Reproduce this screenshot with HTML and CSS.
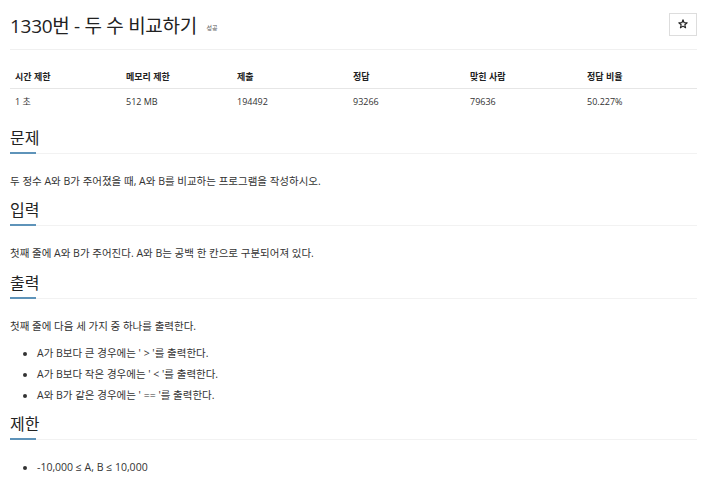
FILE: index.html
```html
<!DOCTYPE html>
<html lang="ko">
<head>
<meta charset="utf-8">
<link rel="stylesheet" href="styles.css">
</head>
<body>
<div class="page">
  <div class="page-header">
    <h1 class="title">1330번 - 두 수 비교하기 <span class="label">성공</span></h1>
    <button class="star" type="button">
      <svg width="10" height="10" viewBox="0 0 10 10"><path d="M5 0.8 L6.1 3.7 L9.2 3.8 L6.8 5.7 L7.6 8.8 L5 7.1 L2.4 8.8 L3.2 5.7 L0.8 3.8 L3.9 3.7 Z" fill="none" stroke="#222" stroke-width="1.1" stroke-linejoin="round"/></svg>
    </button>
  </div>
  <div class="info">
    <div class="row head">
      <div>시간 제한</div><div>메모리 제한</div><div>제출</div><div>정답</div><div>맞힌 사람</div><div>정답 비율</div>
    </div>
    <div class="row">
      <div>1 초</div><div>512 MB</div><div>194492</div><div>93266</div><div>79636</div><div>50.227%</div>
    </div>
  </div>
  <section class="sec">
    <div class="headline"><h2>문제</h2></div>
    <p class="text">두 정수 A와 B가 주어졌을 때, A와 B를 비교하는 프로그램을 작성하시오.</p>
  </section>
  <section class="sec">
    <div class="headline"><h2>입력</h2></div>
    <p class="text">첫째 줄에 A와 B가 주어진다. A와 B는 공백 한 칸으로 구분되어져 있다.</p>
  </section>
  <section class="sec">
    <div class="headline"><h2>출력</h2></div>
    <p class="text">첫째 줄에 다음 세 가지 중 하나를 출력한다.</p>
    <ul class="list">
      <li>A가 B보다 큰 경우에는 '&nbsp;&gt;&nbsp;'를 출력한다.</li>
      <li>A가 B보다 작은 경우에는 '&nbsp;&lt;&nbsp;'를 출력한다.</li>
      <li>A와 B가 같은 경우에는 '&nbsp;==&nbsp;'를 출력한다.</li>
    </ul>
  </section>
  <section class="sec">
    <div class="headline"><h2>제한</h2></div>
    <ul class="list">
      <li>-10,000 ≤ A, B ≤ 10,000</li>
    </ul>
  </section>
</div>
</body>
</html>
```

FILE: styles.css
```css
* { box-sizing: border-box; }
html, body { margin: 0; padding: 0; background: #fff; }
body {
  font-family: "Open Sans", "Noto Sans CJK KR", sans-serif;
  color: #333;
  font-size: 10.5px;
}
.page { padding: 0 18px 0 10px; }

.page-header {
  display: flex;
  align-items: center;
  justify-content: space-between;
  height: 50px;
  border-bottom: 1px solid #f0f0f0;
  padding-top: 1px;
}
.title {
  margin: 0;
  font-weight: 400;
  font-size: 19px;
  color: #222;
  letter-spacing: -0.3px;
}
.label {
  font-size: 6px;
  color: #555;
  vertical-align: middle;
  margin-left: 5px;
  letter-spacing: 0;
}
.star {
  width: 28px;
  height: 23px;
  border: 1px solid #ddd;
  background: #fff;
  padding: 0;
  display: flex;
  align-items: center;
  justify-content: center;
  margin-top: -2px;
}

.info { margin-top: 14px; }
.row {
  display: grid;
  grid-template-columns: 111px 111px 116px 117px 117px 1fr;
  font-size: 9px;
  color: #333;
}
.row > div { padding: 0 5px; }
.row.head {
  font-weight: 700;
  height: 25px;
  align-items: center;
  border-bottom: 1px solid #e6e6e6;
  color: #222;
}
.row:not(.head) { height: 24px; align-items: center; }

.sec { margin: 0; }
.headline {
  border-bottom: 1px solid #f2f2f2;
  margin-top: 10.5px;
}
.sec:first-of-type .headline { margin-top: 14.5px; }
.headline h2 {
  display: inline-block;
  margin: 0 0 -1px 0;
  font-size: 16px;
  font-weight: 400;
  color: #222;
  padding: 0 1px 4px 0;
  border-bottom: 2px solid #5e93b9;
  width: 26px;
  white-space: nowrap;
  line-height: 20px;
}
.text {
  margin: 19px 0 0;
  font-size: 10.5px;
  line-height: 17px;
  color: #333;
}
.list {
  margin: 10px 0 0;
  padding-left: 27px;
  font-size: 10.5px;
  line-height: 17px;
}
.headline + .list { margin-top: 19px; }
.list li + li { margin-top: 4px; }
```
